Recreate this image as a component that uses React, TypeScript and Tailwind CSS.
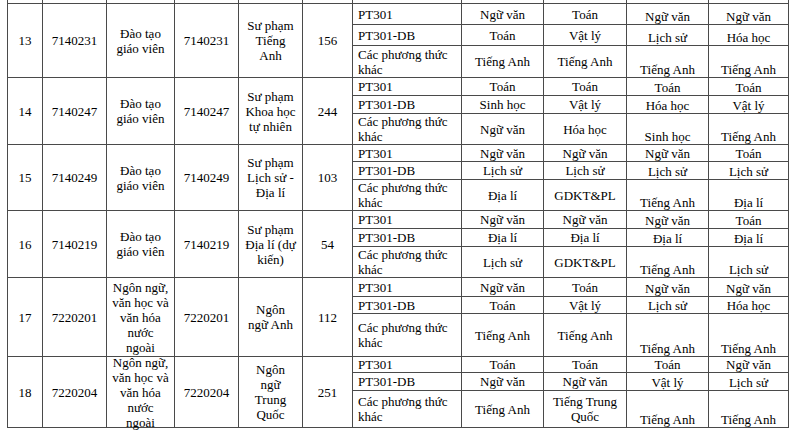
import type { ReactNode } from "react";

type SubRow = {
  method: ReactNode;
  h: string;
  subjects: ReactNode[];
};

type Row = {
  stt: string;
  code: string;
  group: ReactNode;
  majorCode: string;
  major: ReactNode;
  quota: string;
  h: string;
  subs: SubRow[];
};

const OTHER = (
  <>
    Các phương thức
    <br />
    khác
  </>
);

const TEACHER = (
  <>
    Đào tạo
    <br />
    giáo viên
  </>
);

const LANG = (
  <>
    Ngôn ngữ,
    <br />
    văn học và
    <br />
    văn hóa
    <br />
    nước
    <br />
    ngoài
  </>
);

const ROWS: Row[] = [
  {
    stt: "13",
    code: "7140231",
    group: TEACHER,
    majorCode: "7140231",
    major: (
      <>
        Sư phạm
        <br />
        Tiếng
        <br />
        Anh
      </>
    ),
    quota: "156",
    h: "h-[74px]",
    subs: [
      { method: "PT301", h: "h-[21px]", subjects: ["Ngữ văn", "Toán", "Ngữ văn", "Ngữ văn"] },
      { method: "PT301-DB", h: "h-[21px]", subjects: ["Toán", "Vật lý", "Lịch sử", "Hóa học"] },
      { method: OTHER, h: "flex-1", subjects: ["Tiếng Anh", "Tiếng Anh", "Tiếng Anh", "Tiếng Anh"] },
    ],
  },
  {
    stt: "14",
    code: "7140247",
    group: TEACHER,
    majorCode: "7140247",
    major: (
      <>
        Sư phạm
        <br />
        Khoa học
        <br />
        tự nhiên
      </>
    ),
    quota: "244",
    h: "h-[67px]",
    subs: [
      { method: "PT301", h: "h-[18px]", subjects: ["Toán", "Toán", "Toán", "Toán"] },
      { method: "PT301-DB", h: "h-[18px]", subjects: ["Sinh học", "Vật lý", "Hóa học", "Vật lý"] },
      { method: OTHER, h: "flex-1", subjects: ["Ngữ văn", "Hóa học", "Sinh học", "Tiếng Anh"] },
    ],
  },
  {
    stt: "15",
    code: "7140249",
    group: TEACHER,
    majorCode: "7140249",
    major: (
      <>
        Sư phạm
        <br />
        Lịch sử -
        <br />
        Địa lí
      </>
    ),
    quota: "103",
    h: "h-[66px]",
    subs: [
      { method: "PT301", h: "h-[18px]", subjects: ["Ngữ văn", "Ngữ văn", "Ngữ văn", "Toán"] },
      { method: "PT301-DB", h: "h-[19px]", subjects: ["Lịch sử", "Lịch sử", "Lịch sử", "Lịch sử"] },
      { method: OTHER, h: "flex-1", subjects: ["Địa lí", "GDKT&PL", "Tiếng Anh", "Địa lí"] },
    ],
  },
  {
    stt: "16",
    code: "7140219",
    group: TEACHER,
    majorCode: "7140219",
    major: (
      <>
        Sư phạm
        <br />
        Địa lí (dự
        <br />
        kiến)
      </>
    ),
    quota: "54",
    h: "h-[67px]",
    subs: [
      { method: "PT301", h: "h-[19px]", subjects: ["Ngữ văn", "Ngữ văn", "Ngữ văn", "Toán"] },
      { method: "PT301-DB", h: "h-[19px]", subjects: ["Địa lí", "Địa lí", "Địa lí", "Địa lí"] },
      { method: OTHER, h: "flex-1", subjects: ["Lịch sử", "GDKT&PL", "Tiếng Anh", "Lịch sử"] },
    ],
  },
  {
    stt: "17",
    code: "7220201",
    group: LANG,
    majorCode: "7220201",
    major: (
      <>
        Ngôn
        <br />
        ngữ Anh
      </>
    ),
    quota: "112",
    h: "h-[79px]",
    subs: [
      { method: "PT301", h: "h-[19px]", subjects: ["Ngữ văn", "Toán", "Ngữ văn", "Ngữ văn"] },
      { method: "PT301-DB", h: "h-[17px]", subjects: ["Toán", "Vật lý", "Lịch sử", "Hóa học"] },
      { method: OTHER, h: "flex-1", subjects: ["Tiếng Anh", "Tiếng Anh", "Tiếng Anh", "Tiếng Anh"] },
    ],
  },
  {
    stt: "18",
    code: "7220204",
    group: LANG,
    majorCode: "7220204",
    major: (
      <>
        Ngôn
        <br />
        ngữ
        <br />
        Trung
        <br />
        Quốc
      </>
    ),
    quota: "251",
    h: "h-[71px]",
    subs: [
      { method: "PT301", h: "h-[16px]", subjects: ["Toán", "Toán", "Toán", "Ngữ văn"] },
      { method: "PT301-DB", h: "h-[18px]", subjects: ["Ngữ văn", "Ngữ văn", "Vật lý", "Lịch sử"] },
      {
        method: OTHER,
        h: "flex-1",
        subjects: [
          "Tiếng Anh",
          <>
            Tiếng Trung
            <br />
            Quốc
          </>,
          "Tiếng Anh",
          "Tiếng Anh",
        ],
      },
    ],
  },
];

// left block widths (border at the right edge of each cell)
const LEFT_W = ["w-[35px]", "w-[64px]", "w-[68px]", "w-[64px]", "w-[64px]", "w-[50px]"];
const SUBJ_W = ["w-[82px]", "w-[83px]", "w-[82px]", "w-[80px]"];
const LINE = "border-[#4a4a4a]";

function Cell({ w, children }: { w: string; children?: ReactNode }) {
  return (
    <div className={`${w} shrink-0 flex items-center justify-center border-r ${LINE} text-center`}>
      {children}
    </div>
  );
}

export default function App() {
  return (
    <div className="h-[436px] w-[800px] overflow-hidden bg-white font-['Liberation_Serif',serif] text-[13px] leading-[15px] text-black">
      <div className={`ml-[7px] flex w-[782px] flex-col border-l ${LINE}`}>
        {/* tail of the row above, cut off by the crop */}
        <div className={`flex h-[4px] border-b ${LINE}`}>
          {LEFT_W.map((w) => (
            <div key={w + "s"} className={`${w} shrink-0 border-r ${LINE}`} />
          ))}
          <div className={`w-[109px] shrink-0 border-r ${LINE}`} />
          {SUBJ_W.map((w, i) => (
            <div key={i} className={`${w} shrink-0 border-r ${LINE}`} />
          ))}
        </div>

        {ROWS.map((row) => (
          <div key={row.stt} className={`flex ${row.h} border-b ${LINE}`}>
            <Cell w={LEFT_W[0]}>{row.stt}</Cell>
            <Cell w={LEFT_W[1]}>{row.code}</Cell>
            <Cell w={LEFT_W[2]}>{row.group}</Cell>
            <Cell w={LEFT_W[3]}>{row.majorCode}</Cell>
            <Cell w={LEFT_W[4]}>{row.major}</Cell>
            <Cell w={LEFT_W[5]}>{row.quota}</Cell>

            <div className="flex flex-1 flex-col">
              {row.subs.map((sub, si) => (
                <div
                  key={si}
                  className={`flex ${sub.h} ${si < row.subs.length - 1 ? `border-b ${LINE}` : ""}`}
                >
                  <div className={`flex w-[109px] shrink-0 items-center border-r ${LINE} pl-[5px]`}>
                    <span>{sub.method}</span>
                  </div>
                  {sub.subjects.map((s, i) => (
                    <div
                      key={i}
                      className={`${SUBJ_W[i]} flex shrink-0 justify-center border-r ${LINE} text-center ${
                        i < 2 ? "items-center" : "items-end"
                      }`}
                    >
                      <span>{s}</span>
                    </div>
                  ))}
                </div>
              ))}
            </div>
          </div>
        ))}
      </div>
    </div>
  );
}
